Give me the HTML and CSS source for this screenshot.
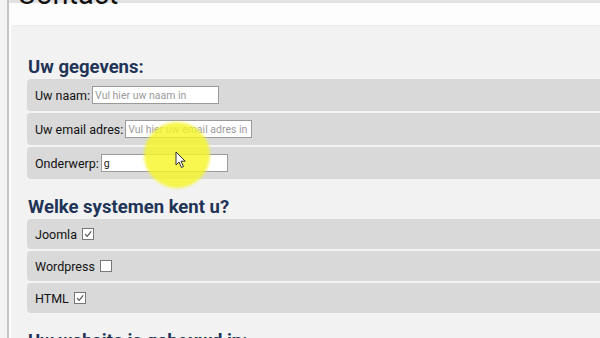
FILE: index.html
```html
<!DOCTYPE html>
<html lang="nl">
<head>
<meta charset="utf-8">
<title>Contact</title>
<link rel="stylesheet" href="styles.css">
</head>
<body>
<div class="page">
  <div class="gutter"></div>
  <div class="main">
    <div class="topbar"></div>
    <h1 class="title">Contact</h1>
    <form class="panel">
      <h2 class="section">Uw gegevens:</h2>
      <div class="row"><label>Uw naam:</label><input type="text" placeholder="Vul hier uw naam in"></div>
      <div class="row"><label>Uw email adres:</label><input type="text" placeholder="Vul hier uw email adres in"></div>
      <div class="row"><label>Onderwerp:</label><input type="text" value="g"></div>

      <h2 class="section second">Welke systemen kent u?</h2>
      <div class="row small"><label>Joomla</label><span class="box checked"><svg viewBox="0 0 10 10"><path d="M2 5.2 L4.2 7.4 L8.2 2.4" /></svg></span></div>
      <div class="row small"><label>Wordpress</label><span class="box"></span></div>
      <div class="row small"><label>HTML</label><span class="box checked"><svg viewBox="0 0 10 10"><path d="M2 5.2 L4.2 7.4 L8.2 2.4" /></svg></span></div>

      <h2 class="section third">Uw website is gebouwd in:</h2>
    </form>
  </div>
</div>
<div class="highlight"></div>
<svg class="cursor" viewBox="0 0 12 18" width="12" height="18"><path d="M1 1 L1 14 L4 11 L6.5 16.5 L8.5 15.6 L6 10.2 L10.2 10.2 Z" fill="#fff" stroke="#333" stroke-width="1"/></svg>
</body>
</html>
```
FILE: styles.css
```css
html, body {
  margin: 0;
  padding: 0;
  width: 600px;
  height: 338px;
  overflow: hidden;
  background: #fdfdfd;
  font-family: Roboto, "Liberation Sans", Arial, sans-serif;
}
.page {
  display: flex;
  height: 338px;
}
.gutter {
  width: 7px;
  background: #f3f3f3;
  border-right: 2px solid #c4c4c4;
  flex: none;
}
.main {
  flex: 1;
  background: #fdfdfd;
  padding-left: 2px;
}
.topbar {
  height: 3px;
  background: #e2e2e2;
  margin-left: -2px;
}
.title {
  margin: -26px 0 0 6px;
  font-size: 29px;
  font-weight: 400;
  line-height: 34px;
  color: #111;
  height: 34px;
}
.panel {
  margin-top: 14px;
  background: #f2f2f2;
  border-radius: 4px 0 0 0;
  padding: 30px 0 20px 16px;
  border-top: 1px solid #ececec;
}
.section {
  margin: 0 0 1px 1px;
  font-size: 18.5px;
  font-weight: 700;
  line-height: 22px;
  color: #1f3457;
}
.section.second { margin-top: 17px; }
.section.third { margin-top: 17px; }
.row {
  display: flex;
  align-items: center;
  height: 32px;
  background: #d9d9d9;
  border-radius: 4px 0 0 4px;
  margin-bottom: 2px;
  padding-left: 8px;
  font-size: 12.5px;
  color: #111;
}
.row.small { height: 30px; }
.row label { margin-right: 2px; }
.row input {
  width: 127px;
  height: 18px;
  box-sizing: border-box;
  border: 1px solid #9a9a9a;
  background: #fff;
  font-family: inherit;
  font-size: 10.5px;
  padding: 0 2px;
  color: #222;
  margin: 0;
}
.row input::placeholder { color: #9a9a9a; }
.box {
  width: 10px;
  height: 10px;
  border: 1px solid #777;
  background: #fff;
  margin-left: 3px;
  display: inline-block;
}
.box svg {
  width: 10px;
  height: 10px;
  display: block;
}
.box svg path {
  fill: none;
  stroke: #555;
  stroke-width: 1.2;
}
.highlight {
  position: absolute;
  left: 144px;
  top: 122px;
  width: 66px;
  height: 66px;
  border-radius: 50%;
  background: rgba(245, 245, 40, 0.82);
  filter: blur(1.5px);
}
.cursor {
  position: absolute;
  left: 175px;
  top: 151px;
}
```
